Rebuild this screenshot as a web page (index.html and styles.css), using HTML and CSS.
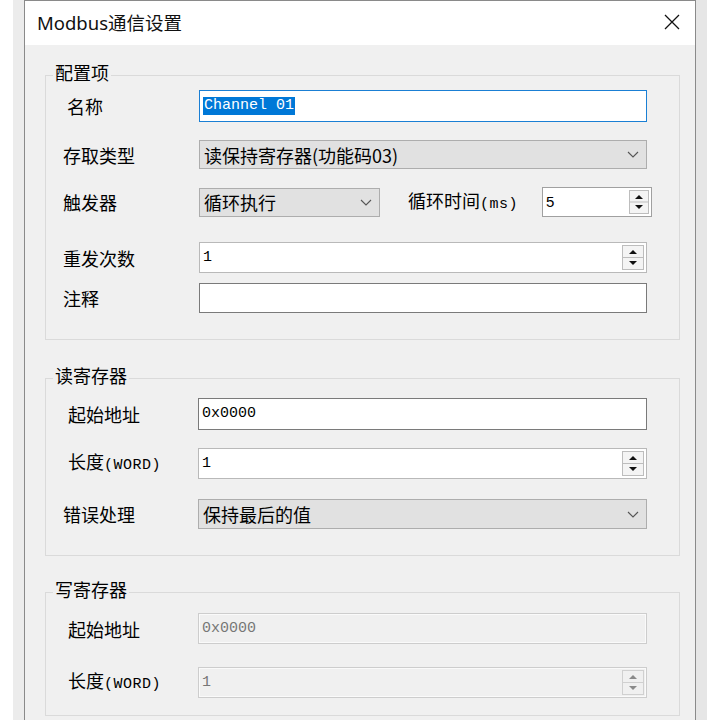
FILE: index.html
```html
<!DOCTYPE html>
<html lang="zh-CN">
<head>
    <meta charset="UTF-8">
    <meta name="viewport" content="width=device-width, initial-scale=1.0">
    <title>Modbus通信设置</title>
    <link rel="stylesheet" href="styles.css">
</head>
<body>
    <div class="window">
        <div class="titlebar">
            <span class="title">Modbus通信设置</span>
            <svg class="close" width="16" height="16" viewBox="0 0 16 16">
                <path d="M1 1 L15 15 M15 1 L1 15" stroke="#111" stroke-width="1.3" fill="none"/>
            </svg>
        </div>
        <div class="content">
            <!-- 配置项 -->
            <fieldset class="group g-config">
                <legend>配置项</legend>
                <div class="row r-name">
                    <label class="lbl indent">名称</label>
                    <div class="field focus"><span class="mono sel">Channel 01</span></div>
                </div>
                <div class="row r-type">
                    <label class="lbl">存取类型</label>
                    <div class="select">
                        <span>读保持寄存器(功能码03)</span>
                        <svg class="chev" width="12" height="7" viewBox="0 0 12 7"><path d="M1 1 L6 6 L11 1" stroke="#555" stroke-width="1.1" fill="none"/></svg>
                    </div>
                </div>
                <div class="row r-trigger">
                    <label class="lbl">触发器</label>
                    <div class="select short">
                        <span>循环执行</span>
                        <svg class="chev" width="12" height="7" viewBox="0 0 12 7"><path d="M1 1 L6 6 L11 1" stroke="#555" stroke-width="1.1" fill="none"/></svg>
                    </div>
                    <label class="lbl cycle">循环时间<span class="mono small">(ms)</span></label>
                    <div class="field num cycle-field">
                        <span class="sans">5</span>
                        <svg class="spin" width="20" height="24" viewBox="0 0 20 24">
                            <rect x="0.5" y="0.5" width="19" height="23" fill="#f4f4f4" stroke="#bdbdbd"/>
                            <line x1="1" y1="12" x2="19" y2="12" stroke="#bdbdbd"/>
                            <path d="M6 9 L10 5 L14 9 Z" fill="#111"/>
                            <path d="M6 15 L10 19 L14 15 Z" fill="#111"/>
                        </svg>
                    </div>
                </div>
                <div class="row r-retry">
                    <label class="lbl">重发次数</label>
                    <div class="field num light">
                        <span class="mono">1</span>
                        <svg class="spin" width="22" height="25" viewBox="0 0 22 25">
                            <rect x="0.5" y="0.5" width="21" height="24" fill="#f4f4f4" stroke="#bdbdbd"/>
                            <line x1="1" y1="12.5" x2="21" y2="12.5" stroke="#bdbdbd"/>
                            <path d="M7 9 L11 5 L15 9 Z" fill="#111"/>
                            <path d="M7 16 L11 20 L15 16 Z" fill="#111"/>
                        </svg>
                    </div>
                </div>
                <div class="row r-note">
                    <label class="lbl">注释</label>
                    <div class="field dark"></div>
                </div>
            </fieldset>

            <!-- 读寄存器 -->
            <fieldset class="group g-read">
                <legend>读寄存器</legend>
                <div class="row r-addr">
                    <label class="lbl indent">起始地址</label>
                    <div class="field dark"><span class="mono">0x0000</span></div>
                </div>
                <div class="row r-len">
                    <label class="lbl indent">长度<span class="mono small">(WORD)</span></label>
                    <div class="field num light">
                        <span class="mono">1</span>
                        <svg class="spin" width="22" height="25" viewBox="0 0 22 25">
                            <rect x="0.5" y="0.5" width="21" height="24" fill="#f4f4f4" stroke="#bdbdbd"/>
                            <line x1="1" y1="12.5" x2="21" y2="12.5" stroke="#bdbdbd"/>
                            <path d="M7 9 L11 5 L15 9 Z" fill="#111"/>
                            <path d="M7 16 L11 20 L15 16 Z" fill="#111"/>
                        </svg>
                    </div>
                </div>
                <div class="row r-error">
                    <label class="lbl">错误处理</label>
                    <div class="select">
                        <span>保持最后的值</span>
                        <svg class="chev" width="12" height="7" viewBox="0 0 12 7"><path d="M1 1 L6 6 L11 1" stroke="#555" stroke-width="1.1" fill="none"/></svg>
                    </div>
                </div>
            </fieldset>

            <!-- 写寄存器 -->
            <fieldset class="group g-write">
                <legend>写寄存器</legend>
                <div class="row r-waddr">
                    <label class="lbl indent">起始地址</label>
                    <div class="field disabled"><span class="mono">0x0000</span></div>
                </div>
                <div class="row r-wlen">
                    <label class="lbl indent">长度<span class="mono small">(WORD)</span></label>
                    <div class="field num disabled">
                        <span class="mono">1</span>
                        <svg class="spin" width="22" height="25" viewBox="0 0 22 25">
                            <rect x="0.5" y="0.5" width="21" height="24" fill="#f0f0f0" stroke="#d0d0d0"/>
                            <line x1="1" y1="12.5" x2="21" y2="12.5" stroke="#d0d0d0"/>
                            <path d="M7 9 L11 5 L15 9 Z" fill="#8a8a8a"/>
                            <path d="M7 16 L11 20 L15 16 Z" fill="#8a8a8a"/>
                        </svg>
                    </div>
                </div>
            </fieldset>
        </div>
    </div>
</body>
</html>
```

FILE: styles.css
```css
body {
    margin: 0;
    background: #fff;
    font-family: "Noto Sans CJK SC", "Microsoft YaHei", sans-serif;
    color: #000;
    height: 720px;
    overflow: hidden;
}
.window {
    margin-left: 24px;
    width: 670px;
    height: 740px;
    border: 1px solid #8a8a8a;
    background: #f0f0f0;
    box-shadow: -11px 0 0 0 #ececec, 11px 0 0 0 #e6e6e6;
}
.titlebar {
    height: 44px;
    background: #fff;
    display: flex;
    align-items: center;
    justify-content: space-between;
    padding: 0 15px 0 12px;
}
.title {
    font-family: "Noto Sans", "Noto Sans CJK SC", sans-serif;
    font-size: 18.5px;
    line-height: 22px;
    color: #111;
    margin-top: -1px;
}
.close {
    margin-top: -2px;
}
.content {
    padding: 17px 15px 0 20px;
}
.group {
    margin: 0;
    border: 1px solid #dadada;
    padding: 0 32px 0 17px;
}
.group legend {
    font-size: 18px;
    line-height: 20px;
    padding: 0 2px 6px;
    margin-left: -10px;
}
.g-config {
    padding-bottom: 26px;
}
.g-read {
    margin-top: 25px;
    padding-bottom: 26px;
}
.g-write {
    margin-top: 23px;
    padding-bottom: 17px;
}
.row {
    display: flex;
    align-items: center;
}
.lbl {
    width: 136px;
    flex: none;
    font-size: 18px;
    line-height: 20px;
    white-space: nowrap;
}
.lbl.indent {
    padding-left: 4px;
    width: 132px;
}
.g-read .lbl, .g-write .lbl {
    width: 135px;
}
.g-read .lbl.indent, .g-write .lbl.indent {
    width: 130px;
    padding-left: 5px;
}
.lbl.cycle {
    width: 134px;
    margin-left: 28px;
}
.mono {
    font-family: "Liberation Mono", monospace;
    font-size: 15px;
}
.mono.small {
    font-size: 15px;
    letter-spacing: 0.5px;
}
.sans {
    font-family: "Liberation Sans", sans-serif;
    font-size: 15px;
}
.field {
    flex: 1;
    box-sizing: border-box;
    height: 31px;
    background: #fff;
    border: 1px solid #a0a0a0;
    display: flex;
    align-items: center;
    padding-left: 3px;
    line-height: 18px;
}
.field.focus {
    border-color: #1a7fd4;
}
.field.dark {
    border-color: #7a7a7a;
}
.field.light {
    border-color: #b9b9b9;
}
.field.num {
    justify-content: space-between;
    padding-right: 2px;
}
.field.disabled {
    background: #f0f0f0;
    border-color: #cdcdcd;
    box-shadow: inset 0 0 0 1px #fafafa;
    color: #777;
}
.sel {
    background: #0078d7;
    color: #fff;
    padding: 0 1px;
}
.cycle-field {
    flex: none;
    width: 110px;
    height: 30px;
    margin-right: -6px;
}
.select {
    flex: 1;
    box-sizing: border-box;
    height: 29px;
    background: #e1e1e1;
    border: 1px solid #adadad;
    display: flex;
    align-items: center;
    justify-content: space-between;
    padding: 0 7px 0 4px;
    font-size: 18px;
    line-height: 20px;
}
.select.short {
    flex: none;
    width: 181px;
}
.g-read .select {
    height: 30px;
}

/* row heights and spacing, matched to the dialog */
.r-name { margin-top: 2px; }
.r-name .field { height: 32px; }
.r-type { margin-top: 18px; }
.r-trigger { margin-top: 18px; }
.r-retry { margin-top: 25px; }
.r-note { margin-top: 10px; }
.r-note .field { height: 30px; }
.r-addr { margin-top: 7px; }
.r-addr .field { height: 32px; }
.r-len { margin-top: 18px; }
.r-error { margin-top: 20px; }
.r-waddr { margin-top: 8px; }
.r-wlen { margin-top: 23px; }
```
